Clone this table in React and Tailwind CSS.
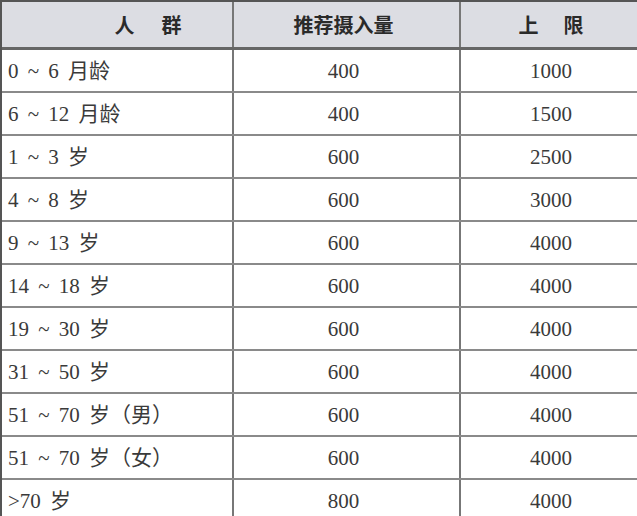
import React from "react";

const rows = [
  ["0 ~ 6 月龄", "400", "1000"],
  ["6 ~ 12 月龄", "400", "1500"],
  ["1 ~ 3 岁", "600", "2500"],
  ["4 ~ 8 岁", "600", "3000"],
  ["9 ~ 13 岁", "600", "4000"],
  ["14 ~ 18 岁", "600", "4000"],
  ["19 ~ 30 岁", "600", "4000"],
  ["31 ~ 50 岁", "600", "4000"],
  ["51 ~ 70 岁（男）", "600", "4000"],
  ["51 ~ 70 岁（女）", "600", "4000"],
  [">70 岁", "800", "4000"],
];

const serif = { fontFamily: '"Liberation Serif", "Noto Sans CJK SC", serif' };

const App = () => {
  return (
    <div className="w-[637px] h-[516px] overflow-hidden bg-white">
      <div className="border-l-2 border-t-2 border-[#555]">
        <div
          className="grid grid-cols-[232px_227px_176px] h-[48px] bg-[#dcdde3] border-b-[3px] border-[#666] text-[#2a2a2a] text-[20px] font-bold"
          style={{ fontFamily: '"Noto Sans CJK SC", sans-serif' }}
        >
          <div className="flex items-center justify-center gap-[27px] pl-[62px] border-r-2 border-[#777]">
            <span>人</span>
            <span>群</span>
          </div>
          <div className="flex items-center justify-center pr-[6px] border-r-2 border-[#777]">
            推荐摄入量
          </div>
          <div className="flex items-center justify-center gap-[25px] pl-[4px]">
            <span>上</span>
            <span>限</span>
          </div>
        </div>
        {rows.map((r, i) => (
          <div
            key={i}
            className="grid grid-cols-[232px_227px_176px] h-[43px] border-b-2 border-[#8a8a8a] text-[#3a3a3a] text-[21px]"
            style={serif}
          >
            <div className="flex items-center pl-[6px] pt-[2px] border-r-2 border-[#777] whitespace-pre [word-spacing:4px]">
              {r[0]}
            </div>
            <div className="flex items-center justify-center pr-[6px] pt-[2px] border-r-2 border-[#777]">
              {r[1]}
            </div>
            <div className="flex items-center justify-center pl-[4px] pt-[2px]">
              {r[2]}
            </div>
          </div>
        ))}
      </div>
    </div>
  );
};

export default App;
